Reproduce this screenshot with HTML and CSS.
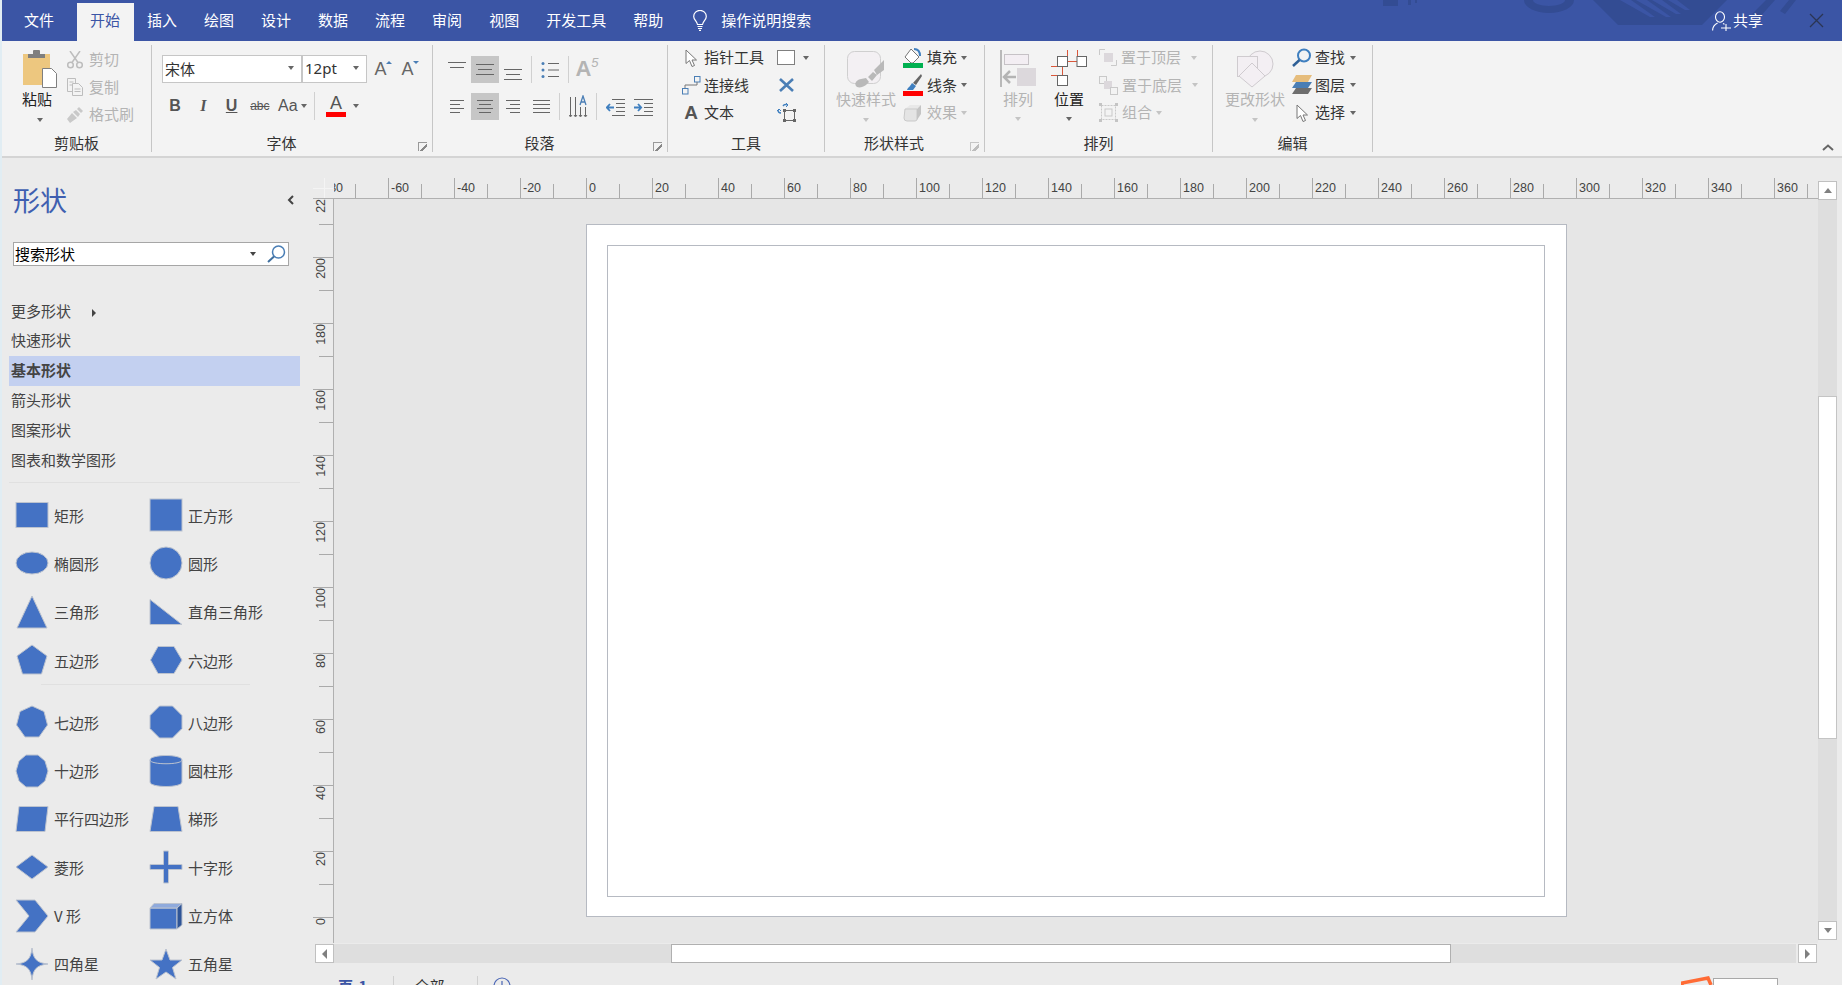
FILE: index.html
```html
<!DOCTYPE html>
<html lang="zh-CN">

<head>
  <meta charset="UTF-8">
  <title>绘图 - Visio</title>
  <link rel="stylesheet" href="styles.css">
</head>

<body>
  <div class="app">

    <header class="titlebar">
      <svg class="title-art" width="1842" height="41" viewBox="0 0 1842 41">
        <path d="M1383 0h15v6h-15zM1408 0h3v5h-3zM1415 0h2v3h-2z" />
        <path d="M1524 0a25 13 0 0 0 50 0h-9a16 6 0 0 1-32 0z" />
        <path d="M1593 0l25 25h84l25-25z" />
        <path class="art-gap" d="M1620 0l30 17h5l-24-17zM1636 0l30 17h5l-24-17zM1652 0l24 14h5l-19-14zM1668 0l17 10h5l-13-10z" />
        <path d="M1752 14l14-14h9l-16 18zM1780 11l9-11h7l-11 14z" />
      </svg>
      <nav class="tabs">
        <span class="tab tab-file">文件</span>
        <span class="tab active">开始</span>
        <span class="tab">插入</span>
        <span class="tab">绘图</span>
        <span class="tab">设计</span>
        <span class="tab">数据</span>
        <span class="tab">流程</span>
        <span class="tab">审阅</span>
        <span class="tab">视图</span>
        <span class="tab">开发工具</span>
        <span class="tab">帮助</span>
      </nav>
      <div class="tell-me">
        <svg width="14" height="21" viewBox="0 0 14 21" fill="none" stroke="#fff" stroke-width="1.2">
          <path d="M4.5 14.5C4 11 .7 10 .7 6.5a6.3 6.1 0 0 1 12.6 0c0 3.5-3.300 4.500-3.800 8z" />
          <path d="M4.500 16.500h5M5 18.500h4M6 20.300h2" />
        </svg>
        <span>操作说明搜索</span>
      </div>
      <div class="title-right">
        <svg width="19" height="20" viewBox="0 0 19 20" fill="none" stroke="#fff" stroke-width="1.1">
          <ellipse cx="8" cy="6" rx="4.500" ry="5.200" />
          <path d="M.6 19.500c0-4.500 3-6.500 5-7.500M11 12.500l1.500.8M9 17h10M14 13v7" />
        </svg>
        <span class="share">共享</span>
        <svg width="15" height="15" viewBox="0 0 15 15" stroke="#2b3553" stroke-width="1.300">
          <path d="M1 1l13 13M14 1L1 14" />
        </svg>
      </div>
    </header>

    <section class="ribbon">

      <div class="group g-clipboard">
        <div class="group-body">
          <div class="big">
            <svg width="34" height="38" viewBox="0 0 34 38">
              <rect y="4" width="27" height="31" fill="#edc77f" />
              <path d="M5 8V4h5V1q0-1 1-1h5q1 0 1 1v3h5v4z" fill="#7f7f7f" />
              <path d="M19.500 18.500h9l5 5v14h-14z" fill="#fff" stroke="#7f7f7f" />
            </svg>
            <span class="big-label paste-label">粘贴</span>
            <i class="caret big-caret"></i>
          </div>
          <div class="stack clip-stack">
            <div class="tool off">
              <svg width="16" height="18" viewBox="0 0 16 18" fill="none" stroke="#bdbdbd" stroke-width="1.500">
                <circle cx="3.500" cy="14" r="2.800" />
                <circle cx="12.500" cy="14" r="2.800" />
                <path d="M5 11.500L13 0M11 11.500L3 0" />
              </svg>
              <span>剪切</span>
            </div>
            <div class="tool off">
              <svg width="16" height="18" viewBox="0 0 16 18" fill="#f3f3f3" stroke="#bdbdbd">
                <path d="M.5.500h8v13h-8zM2.500 4h4M2.500 7h4" />
                <path d="M5.500 5.500h6l4 4v8h-10zM7.500 11h6M7.500 13.500h6" />
              </svg>
              <span>复制</span>
            </div>
            <div class="tool off">
              <svg width="16" height="16" viewBox="0 0 16 16" fill="#c9c9c9">
                <path d="M0 12l5-6 5 5-7 5zM6 5l3-2 4 4-2 3zM10 2l2-2 4 4-2 2z" />
              </svg>
              <span>格式刷</span>
            </div>
          </div>
        </div>
        <div class="group-label">剪贴板</div>
      </div>

      <div class="group g-font">
        <div class="group-body col">
          <div class="font-row">
            <div class="select font-name"><span>宋体</span><i class="caret"></i></div>
            <div class="select font-size"><span>12pt</span><i class="caret"></i></div>
            <span class="grow-btn">A<i class="mini up"></i></span>
            <span class="grow-btn">A<i class="mini down"></i></span>
          </div>
          <div class="format-row">
            <span class="fmt bold">B</span>
            <span class="fmt italic">I</span>
            <span class="fmt under">U</span>
            <span class="fmt strike">abc</span>
            <span class="fmt case">Aa<i class="caret"></i></span>
            <i class="sep"></i>
            <span class="font-color">A<b></b></span>
            <i class="caret color-caret"></i>
          </div>
        </div>
        <div class="group-label has-launcher">字体</div>
        <i class="launcher"></i>
      </div>

      <div class="group g-para">
        <div class="group-body col">
          <div class="para-row">
            <span class="pcell"><svg width="18" height="22" viewBox="0 0 18 22" stroke="#666"><path d="M0 3.500h18M2 8.500h14" /></svg></span>
            <span class="pcell on"><svg width="18" height="22" viewBox="0 0 18 22" stroke="#666"><path d="M0 5.500h18M2 10.500h14M0 15.500h18" /></svg></span>
            <span class="pcell"><svg width="18" height="22" viewBox="0 0 18 22" stroke="#666"><path d="M0 10.500h18M2 15.500h14M0 20.500h18" /></svg></span>
            <i class="sep"></i>
            <span class="pcell"><svg width="18" height="18" viewBox="0 0 18 18" stroke="#666" fill="#4a7eb5"><path d="M7 2.500h11M7 9h11M7 15.500h11" /><circle cx="2" cy="2.500" r="1.500" stroke="none" /><circle cx="2" cy="9" r="1.500" stroke="none" /><circle cx="2" cy="15.500" r="1.500" stroke="none" /></svg></span>
            <i class="sep"></i>
            <span class="pcell text-dir">A<sup>5</sup></span>
          </div>
          <div class="para-row">
            <span class="pcell"><svg width="14" height="14" viewBox="0 0 14 14" stroke="#666"><path d="M0 .500h14M0 4.500h10M0 8.500h14M0 12.500h10" /></svg></span>
            <span class="pcell on"><svg width="18" height="14" viewBox="0 0 18 14" stroke="#666"><path d="M1 .500h16M3 4.500h12M1 8.500h16M3 12.500h12" /></svg></span>
            <span class="pcell"><svg width="14" height="14" viewBox="0 0 14 14" stroke="#666"><path d="M0 .500h14M4 4.500h10M0 8.500h14M4 12.500h10" /></svg></span>
            <span class="pcell"><svg width="17" height="14" viewBox="0 0 17 14" stroke="#666"><path d="M0 .500h17M0 4.500h17M0 8.500h17M0 12.500h17" /></svg></span>
            <i class="sep"></i>
            <span class="pcell"><svg width="19" height="24" viewBox="0 0 19 24" fill="none" stroke="#666"><path d="M1.500 2v19M6.500 2v19M11.500 12v9M16.500 12v9M0 20l1.500 2 1.500-2M5 20l1.500 2 1.500-2M10 20l1.500 2 1.500-2M15 20l1.500 2 1.500-2" /><path d="M11 10l3-9 3 9M12 7h4" stroke="#4a7eb5" stroke-width="1.300" /></svg></span>
            <i class="sep"></i>
            <span class="pcell"><svg width="19" height="18" viewBox="0 0 19 18" fill="none" stroke="#666"><path d="M6 1.500h13M10 5.500h9M10 9.500h9M10 13.500h9M6 17.500h13" /><path d="M8 9.500H1M4 6L.8 9.500 4 13" stroke="#3f7fbf" stroke-width="1.800" /></svg></span>
            <span class="pcell"><svg width="19" height="18" viewBox="0 0 19 18" fill="none" stroke="#666"><path d="M0 1.500h19M10 5.500h9M10 9.500h9M10 13.500h9M0 17.500h19" /><path d="M0 9.500h7M4 6l3.200 3.500L4 13" stroke="#3f7fbf" stroke-width="1.800" /></svg></span>
          </div>
        </div>
        <div class="group-label has-launcher">段落</div>
        <i class="launcher"></i>
      </div>

      <div class="group g-tools">
        <div class="group-body tools-grid">
          <div class="tool">
            <span class="ticon"><svg width="13" height="18" viewBox="0 0 13 18" fill="#fff" stroke="#777"><path d="M1 1v13.500l3.500-3 2.500 6 2.500-1-2.500-5.500h4.500z" /></svg></span>
            <span>指针工具</span>
          </div>
          <div class="tool shape-pick">
            <svg width="18" height="15" viewBox="0 0 18 15" fill="#fff" stroke="#7f7f7f"><rect x=".5" y=".5" width="17" height="14" /></svg>
            <i class="caret"></i>
          </div>
          <div class="tool">
            <span class="ticon"><svg width="20" height="20" viewBox="0 0 20 20" fill="none" stroke="#4a7eb5"><rect x="13.500" y="1.500" width="5.500" height="5.500" /><rect x="1.500" y="13.500" width="5.500" height="5.500" /><path d="M4 13v-3h12V7" stroke="#777" /></svg></span>
            <span>连接线</span>
          </div>
          <div class="tool x-tool">
            <svg width="15" height="14" viewBox="0 0 15 14" stroke="#4a7eb5" stroke-width="2.600"><path d="M1 1l13 12M14 1L1 13" /></svg>
          </div>
          <div class="tool">
            <span class="ticon letter">A</span>
            <span>文本</span>
          </div>
          <div class="tool">
            <svg width="20" height="19" viewBox="0 0 20 19" fill="none"><rect x="7.500" y="7.500" width="10" height="10" stroke="#666" /><path d="M6 3a3 3 0 0 1 4-1M1 7a3 3 0 0 0 3 3" stroke="#3f7fbf" stroke-width="1.400" /><path d="M9 0l2 2-2 2M0 8l2-2 2 2" stroke="#3f7fbf" /><path d="M6 6h3v3H6zM16 6h3v3h-3zM6 16h3v3H6zM16 16h3v3h-3z" fill="#666" /></svg>
          </div>
        </div>
        <div class="group-label">工具</div>
      </div>

      <div class="group g-style">
        <div class="group-body">
          <div class="big big-wide off">
            <svg width="38" height="38" viewBox="0 0 38 38">
              <rect x=".5" y="1.500" width="33" height="32" rx="7" fill="#f3f0f3" stroke="#cfcfcf" />
              <path d="M10 37c-3-2-2-7 4-8l5-1 3 4-3 3c-3 2-6 3-9 2zM21 27l5-5 4 3-5 6zM27 20L37 10v10l-7 5z" fill="#b9b9b9" />
            </svg>
            <span class="big-label">快速样式</span>
            <i class="caret big-caret"></i>
          </div>
          <div class="stack style-stack">
            <div class="tool">
              <svg width="20" height="20" viewBox="0 0 20 20"><path d="M8 1l8 8-6 6H8L2 9z" fill="#fff" stroke="#777" /><path d="M11 1c4 0 6 3 6 7" fill="none" stroke="#3f7fbf" stroke-width="2" /><rect y="15" width="20" height="5" fill="#00b050" /></svg>
              <span>填充</span><i class="caret"></i>
            </div>
            <div class="tool">
              <svg width="20" height="22" viewBox="0 0 20 22"><path d="M18 0l1 2-6 9-3-2z" fill="#666" /><path d="M9 9l4 3-3 4H4c1-3 3-3 5-7z" fill="#3f7fbf" /><rect y="17" width="20" height="5" fill="#f00" /></svg>
              <span>线条</span><i class="caret"></i>
            </div>
            <div class="tool off">
              <svg width="20" height="18" viewBox="0 0 20 18"><path d="M2 5l5-4h11l-4 4z" fill="#e8e8e8" /><path d="M2 5h12v10q0 2-2 2H4q-3 0-3-3z" fill="#e4e4e4" stroke="#c9c9c9" /><path d="M14 5l4-4v9l-4 6z" fill="#c4c4c4" /></svg>
              <span>效果</span><i class="caret"></i>
            </div>
          </div>
        </div>
        <div class="group-label has-launcher">形状样式</div>
        <i class="launcher dim"></i>
      </div>

      <div class="group g-arrange">
        <div class="group-body">
          <div class="big off narrow">
            <svg width="37" height="37" viewBox="0 0 37 37">
              <rect width="2" height="37" fill="#b9b9b9" />
              <rect x="4.500" y="4.500" width="24" height="10" fill="#f3eef3" stroke="#c6c2c6" />
              <rect x="17" y="18" width="19" height="18" fill="#dcd8dc" />
              <path d="M4 27h12M10 21l-6 6 6 6" fill="none" stroke="#b4b4b4" stroke-width="2.500" />
            </svg>
            <span class="big-label">排列</span>
            <i class="caret big-caret"></i>
          </div>
          <div class="big narrow pos-btn">
            <svg width="36" height="37" viewBox="0 0 36 37" fill="#fff">
              <path d="M16.500 0v6M26.500 0v6M0 16.500h6M0 25.500h6M17 11.500h9M11.500 17v8" fill="none" stroke="#d9573a" />
              <rect x="6.500" y="6.500" width="10" height="10" stroke="#666" />
              <rect x="26" y="6.500" width="9.500" height="10" stroke="#666" />
              <rect x="6.500" y="25.500" width="10" height="10" stroke="#666" />
            </svg>
            <span class="big-label pos-label">位置</span>
            <i class="caret big-caret"></i>
          </div>
          <div class="stack arrange-stack">
            <div class="tool off">
              <svg width="18" height="17" viewBox="0 0 18 17"><path d="M.5 6V.5H6M12 16.500h5.500V11" fill="none" stroke="#c9c9c9" /><rect x="5" y="4" width="9" height="9" fill="#dcd8dc" /></svg>
              <span class="w60">置于顶层</span><i class="caret"></i>
            </div>
            <div class="tool off">
              <svg width="19" height="19" viewBox="0 0 19 19" fill="#f3f3f3" stroke="#c9c9c9"><rect x=".5" y=".5" width="7" height="7" /><rect x="5" y="5" width="8" height="8" fill="#dcd8dc" stroke="none" /><rect x="11.500" y="11.500" width="7" height="7" /></svg>
              <span class="w60">置于底层</span><i class="caret"></i>
            </div>
            <div class="tool off">
              <svg width="19" height="19" viewBox="0 0 19 19" fill="none" stroke="#c9c9c9"><rect x="2.500" y="2.500" width="14" height="14" stroke-dasharray="2 1" /><rect x="6" y="6" width="7" height="7" /><path d="M0 0h3v3H0zM16 0h3v3h-3zM0 16h3v3H0zM16 16h3v3h-3z" fill="#c4c4c4" stroke="none" /></svg>
              <span>组合</span><i class="caret"></i>
            </div>
          </div>
        </div>
        <div class="group-label">排列</div>
      </div>

      <div class="group g-edit">
        <div class="group-body">
          <div class="big big-wide off">
            <svg width="38" height="38" viewBox="0 0 38 38" fill="#f3eff3" stroke="#cfcbcf">
              <circle cx="24" cy="14" r="13" />
              <rect x="1.500" y="6.500" width="20" height="20" />
              <path d="M16 13l13 13-13 11-13-11z" />
            </svg>
            <span class="big-label">更改形状</span>
            <i class="caret big-caret"></i>
          </div>
          <div class="stack edit-stack">
            <div class="tool">
              <svg width="20" height="19" viewBox="0 0 20 19" fill="none"><circle cx="12" cy="7.500" r="6" stroke="#3f7fbf" stroke-width="2" /><path d="M7.500 12L1 18" stroke="#2e5f96" stroke-width="2.500" /></svg>
              <span>查找</span><i class="caret"></i>
            </div>
            <div class="tool">
              <svg width="20" height="20" viewBox="0 0 20 20"><path d="M4 0h16l-4 7H0z" fill="#e6bd7c" /><path d="M4 7h16l-4 6H0z" fill="#4a7eb5" /><path d="M4 13h16l-4 6H0z" fill="#6e6e6e" /></svg>
              <span>图层</span><i class="caret"></i>
            </div>
            <div class="tool">
              <span class="sel-icon"><svg width="13" height="18" viewBox="0 0 13 18" fill="#fff" stroke="#777"><path d="M1 1v13.500l3.500-3 2.500 6 2.500-1-2.500-5.500h4.500z" /></svg></span>
              <span>选择</span><i class="caret"></i>
            </div>
          </div>
        </div>
        <div class="group-label">编辑</div>
      </div>

      <svg class="collapse" width="12" height="7" viewBox="0 0 12 7" fill="none" stroke="#666" stroke-width="2"><path d="M1 6l5-4.500L11 6" /></svg>
    </section>

    <div class="workspace">

      <aside class="sidebar">
        <div class="side-head">
          <h1>形状</h1>
          <svg width="7" height="10" viewBox="0 0 7 10" fill="none" stroke="#444" stroke-width="2"><path d="M6 1L2 5l4 4" /></svg>
        </div>
        <div class="search">
          <span>搜索形状</span>
          <i class="caret"></i>
          <svg width="19" height="18" viewBox="0 0 19 18" fill="none"><circle cx="11.500" cy="7" r="6" stroke="#4a7eb5" stroke-width="1.500" /><path d="M7 11.500L1 17" stroke="#3f6f9f" stroke-width="2" /></svg>
        </div>

        <ul class="stencils">
          <li>更多形状<i class="arrow"></i></li>
          <li>快速形状</li>
          <li class="current">基本形状</li>
          <li>箭头形状</li>
          <li>图案形状</li>
          <li>图表和数学图形</li>
        </ul>

        <div class="shapes">
          <div class="shape-item"><svg class="shape" viewBox="0 0 34 34"><rect x="1" y="4.500" width="32" height="25" /></svg>矩形</div>
          <div class="shape-item"><svg class="shape" viewBox="0 0 34 34"><rect x="1" y="1" width="32" height="32" /></svg>正方形</div>
          <div class="shape-item"><svg class="shape" viewBox="0 0 34 34"><ellipse cx="17" cy="17" rx="16" ry="11" /></svg>椭圆形</div>
          <div class="shape-item"><svg class="shape" viewBox="0 0 34 34"><circle cx="17" cy="17" r="16" /></svg>圆形</div>
          <div class="shape-item"><svg class="shape" viewBox="0 0 34 34"><polygon points="17,1 32,33 2,33" /></svg>三角形</div>
          <div class="shape-item"><svg class="shape" viewBox="0 0 34 34"><polygon points="1,4.500 33,29.500 1,29.500" /></svg>直角三角形</div>
          <div class="shape-item"><svg class="shape" viewBox="0 0 34 34"><polygon points="17,2 32,13 26.500,31 7.500,31 2,13" /></svg>五边形</div>
          <div class="shape-item"><svg class="shape" viewBox="0 0 34 34"><polygon points="9,3.500 25,3.500 33,17 25,30.500 9,30.500 1.500,17" /></svg>六边形</div>
          <hr class="shape-rule">
          <div class="shape-item"><svg class="shape" viewBox="0 0 34 34"><polygon points="17,1 29,6.500 32.500,20 24,32 10,32 1.500,20 5,6.500" /></svg>七边形</div>
          <div class="shape-item"><svg class="shape" viewBox="0 0 34 34"><polygon points="10.500,1 23.500,1 33,10.500 33,23.500 23.500,33 10.500,33 1,23.500 1,10.500" /></svg>八边形</div>
          <div class="shape-item"><svg class="shape" viewBox="0 0 34 34"><polygon points="11,1 23,1 30,7 33,17 30,27 23,33 11,33 4,27 1,17 4,7" /></svg>十边形</div>
          <div class="shape-item"><svg class="shape" viewBox="0 0 34 34"><path d="M1 6C1 0 33 0 33 6V28C33 34 1 34 1 28Z" /><path class="line" d="M1 6C1 11 33 11 33 6" /></svg>圆柱形</div>
          <div class="shape-item"><svg class="shape" viewBox="0 0 34 34"><polygon points="4,4.500 33,4.500 30,29.500 1,29.500" /></svg>平行四边形</div>
          <div class="shape-item"><svg class="shape" viewBox="0 0 34 34"><polygon points="5,4.500 29,4.500 33,29.500 1,29.500" /></svg>梯形</div>
          <div class="shape-item"><svg class="shape" viewBox="0 0 34 34"><polygon points="17,5 33,17 17,29 1,17" /></svg>菱形</div>
          <div class="shape-item"><svg class="shape" viewBox="0 0 34 34"><path d="M14.500 1h5v13.500H33v5H19.500V33h-5V19.500H1v-5h13.500z" /></svg>十字形</div>
          <div class="shape-item"><svg class="shape" viewBox="0 0 34 34"><polygon points="1,1 20,1 33,17 20,33 1,33 14,17" /></svg>V 形</div>
          <div class="shape-item"><svg class="shape" viewBox="0 0 34 34"><polygon points="1,9 28,9 28,30 1,30" /><polygon class="lit" points="1,9 5,4.500 33,4.500 28,9" /><polygon class="dim" points="28,9 33,4.500 33,26 28,30" /></svg>立方体</div>
          <div class="shape-item"><svg class="shape" viewBox="0 0 34 34"><path d="M17 1C18 12 22 16 33 17C22 18 18 22 17 33C16 22 12 18 1 17C12 16 16 12 17 1Z" /></svg>四角星</div>
          <div class="shape-item"><svg class="shape" viewBox="0 0 34 34"><polygon points="17,2 21,13 33,13 23.500,20.500 27,32 17,25 7,32 10.500,20.500 1,13 13,13" /></svg>五角星</div>
        </div>
      </aside>

      <main class="drawing">
        <div class="ruler-corner"></div>
        <div class="hruler">
          <span class="hmark">-80</span><span class="hmark">-60</span><span class="hmark">-40</span><span class="hmark">-20</span>
          <span class="hmark">0</span><span class="hmark">20</span><span class="hmark">40</span><span class="hmark">60</span>
          <span class="hmark">80</span><span class="hmark">100</span><span class="hmark">120</span><span class="hmark">140</span>
          <span class="hmark">160</span><span class="hmark">180</span><span class="hmark">200</span><span class="hmark">220</span>
          <span class="hmark">240</span><span class="hmark">260</span><span class="hmark">280</span><span class="hmark">300</span>
          <span class="hmark">320</span><span class="hmark">340</span><span class="hmark">360</span>
        </div>
        <div class="vscroll">
          <span class="sbtn"><i class="tri up"></i></span>
          <div class="vtrack"><div class="vthumb"></div></div>
          <span class="sbtn"><i class="tri down"></i></span>
        </div>
        <div class="vruler">
          <span class="vmark"><em>220</em></span><span class="vmark"><em>200</em></span><span class="vmark"><em>180</em></span>
          <span class="vmark"><em>160</em></span><span class="vmark"><em>140</em></span><span class="vmark"><em>120</em></span>
          <span class="vmark"><em>100</em></span><span class="vmark"><em>80</em></span><span class="vmark"><em>60</em></span>
          <span class="vmark"><em>40</em></span><span class="vmark"><em>20</em></span><span class="vmark"><em>0</em></span>
        </div>
        <div class="canvas">
          <div class="page">
            <div class="page-inner"></div>
          </div>
        </div>
        <div class="hscroll">
          <span class="sbtn"><i class="tri left"></i></span>
          <div class="htrack"><div class="hthumb"></div></div>
          <span class="sbtn"><i class="tri right"></i></span>
        </div>
        <div class="statusbar">
          <span class="page-tab">页-1</span>
          <i class="status-sep first"></i>
          <span class="all-tab">全部</span>
          <i class="status-sep second"></i>
          <svg class="add-page" width="18" height="18" viewBox="0 0 18 18" fill="none" stroke="#4a66b5" stroke-width="1.200"><circle cx="9" cy="9" r="8" /><path d="M9 4v10M4 9h10" /></svg>
          <svg class="orange" width="32" height="9" viewBox="0 0 32 9" fill="none" stroke="#ff6b35" stroke-width="3.500"><path d="M1 9V7L27 2l3 7" /></svg>
          <div class="zoom-box"></div>
        </div>
      </main>

    </div>
  </div>
</body>

</html>
```

FILE: styles.css
```css
* {
  box-sizing: border-box;
}

html,
body {
  margin: 0;
  height: 100%;
  overflow: hidden;
}

body {
  font-family: "Noto Sans CJK SC", "Noto Sans", sans-serif;
  font-size: 15px;
  color: #333;
  background-color: #ebebeb;
}

i,
em {
  font-style: normal;
}

.app {
  height: 985px;
  display: flex;
  flex-direction: column;
  border-left: 2px solid #e1edf3;
  overflow: hidden;
}

/* title bar */

.titlebar {
  position: relative;
  flex: none;
  height: 41px;
  display: flex;
  color: #fff;
  background-color: #3b55a5;
}

.title-art {
  position: absolute;
  left: -2px;
  top: 0;
  fill: #334c93;
}

.title-art .art-gap {
  fill: #3b55a5;
}

.tabs {
  position: relative;
  display: flex;
  margin-left: 8.5px;
}

.tab {
  height: 38px;
  margin-top: 3px;
  padding: 0 13.5px;
  line-height: 34px;
  white-space: nowrap;
}

.tab-file {
  margin-right: 9px;
}

.tab.active {
  color: #3b55a5;
  background-color: #f3f3f3;
}

.tell-me {
  position: relative;
  display: flex;
  align-items: center;
  gap: 14px;
  margin-left: 16.5px;
}

.tell-me span {
  margin-top: -2px;
}

.title-right {
  position: relative;
  display: flex;
  align-items: center;
  margin-left: auto;
  padding-right: 18px;
}

.share {
  margin: -2px 46px 0 2px;
}

/* ribbon */

.ribbon {
  position: relative;
  flex: none;
  height: 117px;
  display: flex;
  padding-top: 4px;
  padding-bottom: 4px;
  background-color: #f3f3f3;
  border-bottom: 2px solid #d4d4d4;
}

.group {
  position: relative;
  height: 107px;
  display: flex;
  flex-direction: column;
  border-right: 1px solid #c6c6c6;
}

.g-clipboard { width: 150px; }
.g-font { width: 281px; }
.g-para { width: 235px; }
.g-tools { width: 157px; }
.g-style { width: 160px; }
.g-arrange { width: 228px; }
.g-edit { width: 160px; }

.group-body {
  flex: 1;
  display: flex;
}

.group-body.col {
  flex-direction: column;
}

.group-label {
  height: 16px;
  margin-top: -1px;
  margin-bottom: 1px;
  line-height: 16px;
  text-align: center;
  white-space: nowrap;
}

.group-label.has-launcher {
  padding-right: 21px;
}

.launcher {
  position: absolute;
  right: 5px;
  bottom: 1px;
  width: 9px;
  height: 9px;
  border-left: 1px solid #999;
  border-top: 1px solid #999;
  background: linear-gradient(135deg, transparent 55%, #888 55%, #888 75%, transparent 75%);
}

.launcher.dim {
  opacity: 0.5;
}

.collapse {
  position: absolute;
  right: 8px;
  bottom: 5px;
}

.caret {
  display: inline-block;
  flex: none;
  width: 0;
  height: 0;
  border-left: 3.5px solid transparent;
  border-right: 3.5px solid transparent;
  border-top: 4px solid #666;
}

.sep {
  flex: none;
  width: 1px;
  align-self: stretch;
  margin: 0 4px;
  background-color: #d0d0d0;
}

.off {
  color: #b4b4b4;
}

.off .caret {
  border-top-color: #c4c4c4;
}

.big {
  display: flex;
  flex-direction: column;
  align-items: center;
  padding-top: 5px;
}

.big svg {
  flex: none;
}

.big-label {
  height: 22px;
  line-height: 22px;
  white-space: nowrap;
}

.big-caret {
  margin-top: 8px;
}

.big-wide {
  width: 60px;
}

.narrow {
  width: 36px;
  margin-left: 15px;
}

.narrow .big-label {
  margin-top: 1px;
}

.narrow .big-caret {
  margin-top: 7px;
}

.stack {
  display: grid;
  grid-auto-rows: 27.5px;
  margin-top: -1px;
}

.tool {
  display: flex;
  align-items: center;
  white-space: nowrap;
}

.tool span {
  margin-top: -2px;
}

.tool .ticon,
.tool .sel-icon {
  margin-top: 0;
}

.tool svg {
  flex: none;
}

/* clipboard */

.g-clipboard .group-body {
  padding-left: 21px;
}

.paste-label {
  margin-left: -6px;
  color: #222;
}

.g-clipboard .big {
  width: 34px;
}

.clip-stack {
  margin: 1px 0 0 10px;
}

.clip-stack .tool {
  gap: 6px;
}

/* font */

.g-font .group-body {
  padding: 10px 0 0 10px;
}

.font-row,
.format-row {
  display: flex;
  align-items: center;
}

.font-row {
  height: 28px;
}

.format-row {
  height: 28px;
  margin-top: 9px;
}

.select {
  height: 28px;
  display: flex;
  align-items: center;
  justify-content: space-between;
  padding: 0 7px 2px 2px;
  background-color: #fff;
  border: 1px solid #c6c6c6;
}

.font-name {
  width: 140px;
}

.font-size {
  width: 65px;
  font-family: "Noto Sans", sans-serif;
}

.grow-btn {
  position: relative;
  width: 27px;
  text-align: center;
  font-family: "Liberation Sans", sans-serif;
  font-size: 18px;
  color: #666;
}

.mini {
  position: absolute;
  right: 2px;
  top: 2px;
  border-left: 3px solid transparent;
  border-right: 3px solid transparent;
}

.mini.up {
  border-bottom: 3px solid #4a7eb5;
}

.mini.down {
  border-top: 3px solid #4a7eb5;
}

.fmt {
  flex: none;
  width: 28.250px;
  text-align: center;
  font-family: "Liberation Sans", sans-serif;
  font-size: 16px;
  color: #555;
}

.fmt:first-child {
  margin-left: -1px;
}

.fmt.bold {
  font-weight: bold;
}

.fmt.italic {
  font-style: italic;
  font-weight: bold;
  font-family: "Liberation Serif", serif;
}

.fmt.under {
  font-weight: bold;
  text-decoration: underline;
}

.fmt.strike {
  font-size: 12px;
  text-decoration: line-through;
}

.fmt.case {
  width: 34px;
  display: flex;
  align-items: center;
  gap: 3px;
  padding-left: 4px;
}

.format-row .sep {
  margin: 0 11px 0 6px;
}

.font-color {
  width: 20px;
  height: 24px;
  margin-top: -3px;
  position: relative;
  text-align: center;
  font-family: "Liberation Sans", sans-serif;
  font-size: 18px;
  line-height: 20px;
  color: #555;
}

.font-color b {
  position: absolute;
  left: 0;
  bottom: 0;
  width: 20px;
  height: 5px;
  background-color: #f00;
}

.color-caret {
  margin-left: 7px;
}

/* paragraph */

.g-para .group-body {
  padding: 11px 0 0 10px;
}

.para-row {
  display: flex;
  height: 27px;
  margin-bottom: 10px;
}

.pcell {
  flex: none;
  width: 28px;
  display: flex;
  align-items: center;
  justify-content: center;
}

.pcell.on {
  background-color: #c6c6c6;
}

.text-dir {
  align-items: flex-start;
  font-family: "Liberation Sans", sans-serif;
  font-size: 22px;
  font-weight: bold;
  color: #b4b4b4;
}

.text-dir sup {
  font-size: 13px;
  font-weight: normal;
  font-style: italic;
  line-height: 1;
  vertical-align: top;
}

/* tools */

.tools-grid {
  display: grid;
  grid-template-columns: 96px 40px;
  grid-auto-rows: 27.5px;
  padding-left: 13px;
  margin-top: -1px;
}

.ticon {
  width: 20px;
  margin-right: 3px;
  display: flex;
  justify-content: center;
}

.letter {
  font-family: "Liberation Sans", sans-serif;
  font-size: 19px;
  font-weight: bold;
  color: #555;
}

.shape-pick {
  gap: 8px;
}

.x-tool {
  padding-left: 2px;
}

/* shape styles, arrange, edit */

.g-style .group-body {
  padding-left: 11px;
}

.style-stack {
  margin-left: 7px;
}

.style-stack .tool {
  gap: 4px;
}

.style-stack .caret {
  margin-left: 0;
}

.edit-stack .caret {
  margin-left: 2px;
}

.pos-btn {
  color: #222;
}

.pos-label {
  color: #222;
}

.arrange-stack {
  margin-left: 12px;
}

.arrange-stack .tool {
  gap: 4px;
}

.w60 {
  width: 60px;
  margin-right: 6px;
}

.g-edit .group-body {
  padding-left: 12px;
}

.edit-stack {
  margin-left: 7px;
}

.edit-stack .tool {
  gap: 3px;
}

.sel-icon {
  width: 20px;
  display: flex;
  justify-content: center;
}

/* workspace */

.workspace {
  flex: 1;
  display: flex;
  min-height: 0;
}

.sidebar {
  flex: none;
  width: 311px;
  padding: 26px 0 0 7px;
  overflow: hidden;
}

.side-head {
  display: flex;
  align-items: center;
  justify-content: space-between;
  width: 285px;
  padding-left: 4px;
}

.side-head h1 {
  margin: 0;
  font-size: 27px;
  font-weight: normal;
  line-height: 32px;
  color: #3f5fb0;
}

.search {
  width: 276px;
  height: 24px;
  margin: 26px 0 0 4px;
  padding: 0 2px 0 1px;
  display: flex;
  align-items: center;
  color: #000;
  background-color: #fff;
  border: 1px solid #a6a6a6;
}

.search span {
  flex: 1;
  margin-top: -2px;
}

.search .caret {
  margin-right: 11px;
  border-top-color: #444;
}

.stencils {
  margin: 30px 0 0;
  padding: 0 0 6px;
  list-style: none;
  width: 291px;
  border-bottom: 1px solid #e0e0e0;
}

.stencils li {
  height: 30px;
  padding-left: 2px;
  line-height: 28px;
  color: #444;
}

.stencils li:first-child {
  line-height: 30px;
}

.stencils .current {
  font-weight: bold;
  background-color: #c3d0f0;
}

.arrow {
  display: inline-block;
  margin-left: 21px;
  border-top: 4px solid transparent;
  border-bottom: 4px solid transparent;
  border-left: 4px solid #444;
}

.shapes {
  display: grid;
  grid-template-columns: 134px 134px;
  grid-template-rows: repeat(4, 48.3px) 14px;
  grid-auto-rows: 48.3px;
  margin-top: 8px;
  padding-left: 6px;
}

.shape-item {
  display: flex;
  align-items: center;
  gap: 5px;
  white-space: nowrap;
  color: #444;
}

.shape {
  flex: none;
  width: 34px;
  height: 34px;
}

.shape * {
  fill: #4472c4;
  stroke: #bcc3cf;
}

.shape .line {
  fill: none;
}

.shape .lit {
  fill: #8faadc;
}

.shape .dim {
  fill: #2f5597;
}

.shape-rule {
  grid-column: 1 / 3;
  height: 1px;
  width: 209px;
  margin: 0 0 0 26px;
  border: 0;
  background-color: #e0e0e0;
}

/* drawing area */

.drawing {
  flex: 1;
  display: grid;
  grid-template-columns: 21px 1484px 19px;
  grid-template-rows: 21px 744px 20px 1fr;
  padding-top: 20px;
  min-width: 0;
  overflow: hidden;
}

.ruler-corner {
  grid-column: 1;
  grid-row: 1;
  background:
    linear-gradient(#f4f4f4, #f4f4f4) 11px 0 / 1px 20px no-repeat,
    linear-gradient(#f4f4f4, #f4f4f4) 0 10px / 20px 1px no-repeat;
  border-bottom: 1px solid #b0b0b0;
}

.hruler {
  grid-column: 2;
  grid-row: 1;
  display: flex;
  overflow: hidden;
  height: 21px;
  border-bottom: 1px solid #b0b0b0;
  font-family: "Liberation Sans", sans-serif;
  font-size: 12.500px;
  color: #444;
}

.hmark {
  position: relative;
  flex: 0 0 66px;
  height: 20px;
  padding: 2px 0 0 2px;
  line-height: 16px;
  border-left: 1px solid #aaa;
}

.hmark:first-child {
  margin-left: -12px;
}

.hmark::after {
  content: "";
  position: absolute;
  left: 32px;
  bottom: 0;
  width: 1px;
  height: 14px;
  background-color: #aaa;
}

.vruler {
  grid-column: 1;
  grid-row: 2;
  overflow: hidden;
  border-right: 1px solid #b0b0b0;
  font-family: "Liberation Sans", sans-serif;
  font-size: 12.500px;
  color: #444;
}

.vmark {
  position: relative;
  display: block;
  height: 66px;
  border-top: 1px solid #aaa;
}

.vmark:first-child {
  margin-top: -8px;
}

.vmark em {
  display: block;
  width: 16px;
  padding-top: 2px;
  writing-mode: vertical-rl;
  transform: rotate(180deg);
  line-height: 16px;
}

.vmark::after {
  content: "";
  position: absolute;
  right: 0;
  top: 32px;
  width: 14px;
  height: 1px;
  background-color: #aaa;
}

.canvas {
  grid-column: 2;
  grid-row: 2;
  padding: 25px 0 0 252px;
  overflow: hidden;
  background-color: #e6e6e6;
}

.page {
  width: 981px;
  height: 693px;
  padding: 20px 21px 20px 20px;
  background-color: #fff;
  border: 1px solid #b6bac2;
}

.page-inner {
  height: 652px;
  width: 938px;
  border: 1px solid #b6bac2;
}

.vscroll {
  grid-column: 3;
  grid-row: 1 / 3;
  display: flex;
  flex-direction: column;
  padding: 3px 0;
}

.hscroll {
  grid-column: 1 / 3;
  grid-row: 3;
  display: flex;
  padding: 1px 1px 0 2px;
}

.sbtn {
  flex: none;
  width: 19px;
  height: 19px;
  display: flex;
  align-items: center;
  justify-content: center;
  background-color: #fff;
  border: 1px solid #c0c0c0;
}

.tri {
  width: 0;
  height: 0;
}

.tri.up {
  border: 4.500px solid transparent;
  border-top: 0;
  border-bottom: 5px solid #808080;
}

.tri.down {
  border: 4.500px solid transparent;
  border-bottom: 0;
  border-top: 5px solid #808080;
}

.tri.left {
  border: 5px solid transparent;
  border-left: 0;
  border-right: 5px solid #808080;
}

.tri.right {
  border: 5px solid transparent;
  border-right: 0;
  border-left: 5px solid #808080;
}

.vtrack {
  flex: 1;
  padding-top: 196px;
  background-color: #dedede;
}

.vthumb {
  height: 343px;
  background-color: #fff;
  border: 1px solid #c4c4c4;
}

.htrack {
  flex: 1;
  margin-right: 2px;
  padding-left: 337px;
  background-color: #dedede;
}

.hthumb {
  width: 780px;
  height: 100%;
  background-color: #fff;
  border: 1px solid #b0b0b0;
}

.statusbar {
  grid-column: 1 / 4;
  grid-row: 4;
  display: flex;
  align-items: flex-start;
  height: 22px;
  width: 1529px;
  padding-left: 25px;
  overflow: hidden;
}

.page-tab {
  margin-top: 13px;
  line-height: 20px;
  font-weight: bold;
  color: #3b55a5;
}

.all-tab {
  margin: 13px 0 0 20px;
  line-height: 20px;
}

.status-sep {
  width: 1px;
  height: 12px;
  margin-top: 13px;
  background-color: #d0d0d0;
}

.status-sep.first {
  margin-left: 26px;
}

.status-sep.second {
  margin-left: 33px;
}

.add-page {
  margin: 14px 0 0 15px;
}

.orange {
  margin: 13px 0 0 auto;
}

.zoom-box {
  width: 65px;
  height: 12px;
  margin: 15px 64px 0 0;
  background-color: #fff;
  border: 1px solid #a8a8a8;
}
```
